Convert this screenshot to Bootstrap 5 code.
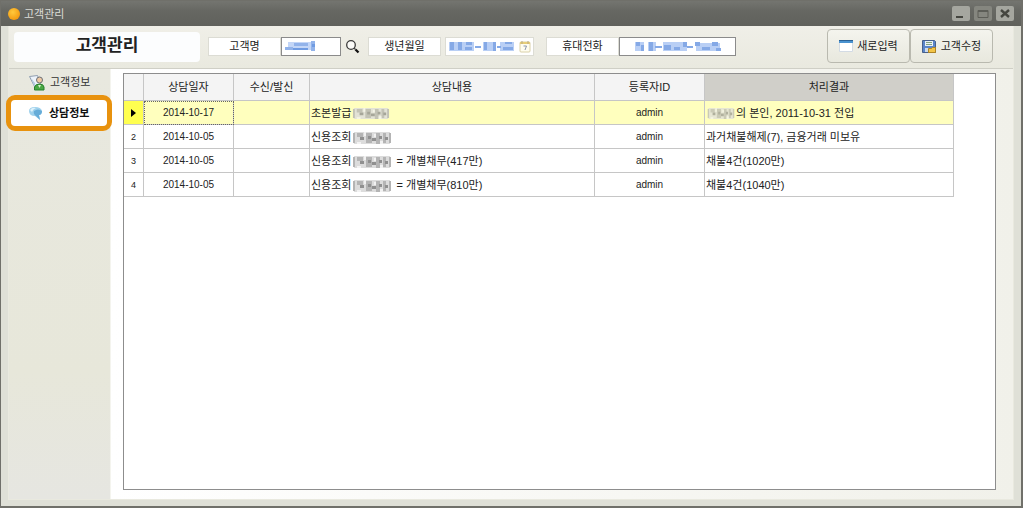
<!DOCTYPE html>
<html lang="ko">
<head>
<meta charset="utf-8">
<meta name="viewport" content="width=device-width, initial-scale=1">
<title>고객관리</title>
<link rel="stylesheet" href="https://cdn.jsdelivr.net/npm/bootstrap@5.3.0/dist/css/bootstrap.min.css">
<style>
  body { font: 11px/16px "Liberation Sans", "Noto Sans CJK KR", sans-serif; color: #222; background: #dfe0d7; }
  .app-window { border: 1px solid #70706a; border-bottom-width: 2px; border-right-width: 2px; }
  .title-bar { height: 25px; padding: 0 7px; background: linear-gradient(#747570, #666762 40%, #60615c); color: #dcdcd6; }
  .app-dot { width: 12px; height: 12px; border-radius: 50%; background: radial-gradient(circle at 40% 35%, #ffc93c, #f39a10 75%); }
  .win-btn { width: 18px; height: 15px; border: 0; border-radius: 2px; background: #a5a69f; color: #454640; }
  .win-btn.is-off { background: #85867f; color: #5c5d57; }
  .win-btn svg { display: block; }
  .app-frame { margin: 0 7px 6px; border: 1px solid #e9e9df; border-top: 0; background: #f1f1ea; }
  .tool-bar { height: 43px; padding: 0 20px 2px 5px; background: linear-gradient(#f0efe8, #e9e9df); border-bottom: 1px solid #cfcfc6; }
  .tool-bar > * { flex-shrink: 0; }
  .page-name { width: 186px; height: 30px; margin: 2px 8px 0 0; font-size: 17px; line-height: 28px; font-weight: 700; background: #fcfdfe; border-radius: 4px; }
  .field-name { height: 19px; line-height: 16px; width: 73px; background: #fff; border: 1px solid #dcdcd4; text-align: center; }
  .field-box { display: block; height: 19px; border: 1px solid #8b8b8b; background: #fff; padding: 0 4px; }
  .field-box.is-soft { border-color: #dcdcd4; }
  .w-name { width: 60px; } .w-birth { width: 89px; } .w-phone { width: 117px; }
  .over-box { position: absolute; top: 4px; left: 4px; }
  .over-phone { left: 15px; }
  .over-cal { position: absolute; top: 3px; right: 3px; }
  .find-btn { border: 0; background: none; padding: 0; margin: 0 8px 0 4px; }
  .find-btn svg { display: block; }
  .phone-set { margin-left: 12px; }
  .tool-btn { width: 83px; height: 34px; padding: 0; border: 1px solid #b9b9af; border-radius: 4px; background: linear-gradient(#f4f4ee, #e8e8de); color: #222; }
  .side-nav { width: 102px; padding-top: 1px; background: linear-gradient(#e8e8df, #e7e7da 70%, #e6e6e1); border-right: 1px solid #f4f4ee; }
  .side-link { height: 24px; color: #333; text-decoration: none; padding-left: 19px; gap: 5px; }
  .side-link.is-current { position: relative; height: 36px; margin: 1px -2px 0 -3px; padding-left: 16px; border: 5px solid #e8920e; border-radius: 9px; background: #fff; font-weight: 700; color: #111; z-index: 1; }
  .main-pane { padding: 4px 17px 9px 12px; background: linear-gradient(90deg, #fff, #f1f1ea); }
  .grid-box { border: 1px solid #8d8d8d; background: #fff; }
  .data-grid { width: 830px; table-layout: fixed; border-collapse: separate; border-spacing: 0; }
  .data-grid th, .data-grid td { border: solid #c6c6c6; border-width: 0 1px 1px 0; height: 24px; padding: 0 1px; white-space: nowrap; vertical-align: middle; }
  .data-grid thead th { height: 27px; font-weight: 400; background: #f4f4f4; text-align: center; }
  .data-grid thead th.is-sorted { background: #d0cfc9; }
  .data-grid .row-no { font-size: 9px; font-weight: 400; text-align: center; background: #fff; }
  .data-grid .mid { font-size: 10px; text-align: center; }
  .data-grid .is-active td { background: #ffffbe; }
  .data-grid .is-active .row-no { background: #ffff50; }
  .data-grid td.is-focus { outline: 1px dotted #666; outline-offset: -1px; }
  .hidden-name { vertical-align: middle; margin: 0 1px; }
  .c-no { width: 20px; } .c-date { width: 90px; } .c-way { width: 76px; } .c-text { width: 285px; } .c-id { width: 110px; }
</style>
</head>
<body>
<svg class="d-none" aria-hidden="true">
  <symbol id="veil" viewBox="0 0 40 12" preserveAspectRatio="none">
    <path fill="#dcdcdc" d="M2 0h36v12H2z"/>
    <path fill="#b4b4b4" d="M1 1h2v10H1zM5 1h6v4H5zM14 1h6v10h-6zM24 1h4v11h-4zM31 1h3v10h-3zM37 1h2v10h-2z"/>
    <path fill="#909090" d="M8 5h4v3H8zM16 4h3v3h-3zM20 6h4v3h-4zM27 4h3v3h-3zM33 5h3v3h-3z"/>
    <path fill="#f2f2f2" d="M12 0h2v4h-2zM22 2h2v3h-2zM28 9h3v3h-3zM5 10h4v2H5z"/>
  </symbol>
</svg>
<div class="app-window d-flex flex-column min-vh-100">
  <header class="title-bar d-flex align-items-center">
    <span class="app-dot"></span><span class="me-auto ps-1">고객관리</span>
    <div class="d-flex gap-1">
      <button class="win-btn p-0" type="button" aria-label="최소화"><svg width="18" height="15"><path d="M4 10h7v2H4z" fill="currentColor"/></svg></button>
      <button class="win-btn is-off p-0" type="button" aria-label="최대화"><svg width="18" height="15"><path d="M4 4.500h10v7H4zM4 5.500h10" fill="none" stroke="currentColor"/></svg></button>
      <button class="win-btn p-0" type="button" aria-label="닫기"><svg width="18" height="15"><path d="M5 4l8 7M13 4l-8 7" stroke="currentColor" stroke-width="2.400"/></svg></button>
    </div>
  </header>
  <div class="app-frame flex-grow-1 d-flex flex-column">
    <form class="tool-bar d-flex align-items-center">
      <h1 class="page-name text-center">고객관리</h1>
      <div class="d-flex align-items-center">
        <label class="field-name" for="cname">고객명</label>
        <div class="position-relative">
          <input class="field-box w-name" id="cname" type="text">
          <svg class="over-box" width="31" height="11"><path fill="#c3d6f7" d="M3 1h26v8H3z"/><path fill="#92b3ea" d="M0 6h8v3H0zM9 2h14v3H9zM26 0h4v10h-4z"/><path fill="#6f9be2" d="M8 7h15v2H8zM27 3h3v3h-3z"/></svg>
        </div>
        <button class="find-btn" type="button" aria-label="찾기"><svg width="15" height="15"><circle cx="6" cy="6" r="4.300" fill="#fbfbf8" stroke="#3b3b3b" stroke-width="1.300"/><path d="M9 9l1.500 1.500" stroke="#444" stroke-width="1.300"/><path d="M10.500 10.500l3 3" stroke="#111" stroke-width="2.300"/></svg></button>
        <label class="field-name" for="birth">생년월일</label>
        <div class="position-relative ms-1">
          <input class="field-box is-soft w-birth" id="birth" type="text">
          <svg class="over-box" width="66" height="11"><path fill="#b9cff5" d="M0 1h25v9H0zM34 1h13v9H34zM51 1h14v9H51z"/><path fill="#85a9e6" d="M1 1h4v8H1zM9 1h4v8H9zM17 1h6v3h-6zM16 6h7v3h-7zM26 5h6v2h-6zM35 1h3v8h-3zM44 1h3v9h-3zM48 5h4v2h-4zM54 6h10v3H54zM56 1h7v2h-7z"/></svg>
          <svg class="over-cal" width="12" height="13"><rect x="1" y="2" width="10" height="10" rx="1" fill="#fffdf0" stroke="#d9d0a8"/><path d="M1 2h10v2H1z" fill="#e8ce78"/><path d="M3 1v3M9 1v3" stroke="#b8a984"/><path d="M4.500 6h3l-1.500 4" fill="none" stroke="#8b97ad"/></svg>
        </div>
        <div class="phone-set d-flex">
          <label class="field-name" for="phone">휴대전화</label>
          <div class="position-relative">
            <input class="field-box w-phone" id="phone" type="text">
            <svg class="over-box over-phone" width="88" height="11"><path fill="#b9cff5" d="M1 1h9v9H1zM14 1h8v9h-8zM29 1h24v9H29zM62 2h24v8H62z"/><path fill="#85a9e6" d="M2 1h4v4H2zM7 4h3v6H7zM15 1h4v9h-4zM21 5h7v2h-7zM30 4h7v5h-7zM40 6h6v3h-6zM49 1h4v5h-4zM53 5h6v2h-6zM61 1h5v4h-5zM68 6h8v3h-8zM78 1h6v4h-6zM82 7h5v3h-5z"/></svg>
          </div>
        </div>
      </div>
      <div class="d-flex ms-auto">
        <button class="tool-btn d-flex align-items-center justify-content-center gap-1" type="button"><svg width="14" height="12"><path fill="#fff" stroke="#d3dbe4" d="M.5 1.500h13v10H.5z"/><path fill="#4a93d0" d="M0 0h14v3H0z"/><path fill="#2b6297" d="M0 0h14v1H0z"/></svg>새로입력</button>
        <button class="tool-btn d-flex align-items-center justify-content-center gap-1" type="button"><svg width="15" height="15"><path fill="#5b86c9" stroke="#47618d" d="M.5 1.500h12l1 1v11H.5z"/><path fill="#e9f0f7" d="M3 2h8v5H3z"/><path d="M4 3.500h6M4 5.500h6" stroke="#83a37e"/><path fill="#ccd9ea" d="M3 9h5v4H3z"/><path fill="#f3c548" stroke="#af8425" d="M6.500 9.500h3l1-1h3v5h-7z"/></svg>고객수정</button>
      </div>
    </form>
    <div class="d-flex flex-grow-1">
      <nav class="side-nav flex-shrink-0">
        <a class="side-link d-flex align-items-center" href="#"><svg width="17" height="17"><path fill="#edf3fa" stroke="#92a0b2" d="M1.500 2.500l8-1 3 8-5 5z"/><path fill="#b8cbe2" d="M3 4l3 8 2 2-1-5z"/><circle cx="11.500" cy="6" r="3" fill="#efc9a4" stroke="#6b7077"/><path fill="#4aa845" stroke="#27802d" d="M6.500 16v-3q1-3 5-3t4.500 3v3z"/><path fill="#d9f0cf" d="M10 11h3l-1.500 3z"/></svg>고객정보</a>
        <a class="side-link is-current d-flex align-items-center" href="#" aria-current="page"><svg width="17" height="16"><path fill="#9fd1ec" d="M2 6q0-4 6-4t7 4q0 3-3 4l1 5-5-4q-6 0-6-5z"/><path fill="#66acd8" d="M7 6q4-3 8 0 0 4-3 4l1 5-4-4q-3-2-2-5z"/><path fill="#dff2fb" d="M3 5q2-3 6-2-3 1-4 4z"/></svg>상담정보</a>
      </nav>
      <main class="main-pane flex-grow-1 d-flex">
        <div class="grid-box flex-grow-1">
          <table class="data-grid">
            <colgroup><col class="c-no"><col class="c-date"><col class="c-way"><col class="c-text"><col class="c-id"><col></colgroup>
            <thead><tr><th></th><th scope="col">상담일자</th><th scope="col">수신/발신</th><th scope="col">상담내용</th><th scope="col">등록자ID</th><th scope="col" class="is-sorted">처리결과</th></tr></thead>
            <tbody>
              <tr class="is-active"><th class="row-no" scope="row"><svg width="5" height="8"><path d="M0 0l5 4-5 4z"/></svg></th><td class="mid is-focus">2014-10-17</td><td></td><td>초본발급<svg class="hidden-name" width="38" height="11" opacity=".8"><use href="#veil"/></svg></td><td class="mid">admin</td><td><svg class="hidden-name" width="28" height="11" opacity=".7"><use href="#veil"/></svg>의 본인, 2011-10-31 전입</td></tr>
              <tr><th class="row-no" scope="row">2</th><td class="mid">2014-10-05</td><td></td><td>신용조회<svg class="hidden-name" width="40" height="12"><use href="#veil"/></svg></td><td class="mid">admin</td><td>과거채불해제(7), 금융거래 미보유</td></tr>
              <tr><th class="row-no" scope="row">3</th><td class="mid">2014-10-05</td><td></td><td>신용조회<svg class="hidden-name" width="40" height="12"><use href="#veil"/></svg> = 개별채무(417만)</td><td class="mid">admin</td><td>채불4건(1020만)</td></tr>
              <tr><th class="row-no" scope="row">4</th><td class="mid">2014-10-05</td><td></td><td>신용조회<svg class="hidden-name" width="40" height="12"><use href="#veil"/></svg> = 개별채무(810만)</td><td class="mid">admin</td><td>채불4건(1040만)</td></tr>
            </tbody>
          </table>
        </div>
      </main>
    </div>
  </div>
</div>
<script src="https://cdn.jsdelivr.net/npm/bootstrap@5.3.0/dist/js/bootstrap.bundle.min.js"></script>
</body>
</html>
